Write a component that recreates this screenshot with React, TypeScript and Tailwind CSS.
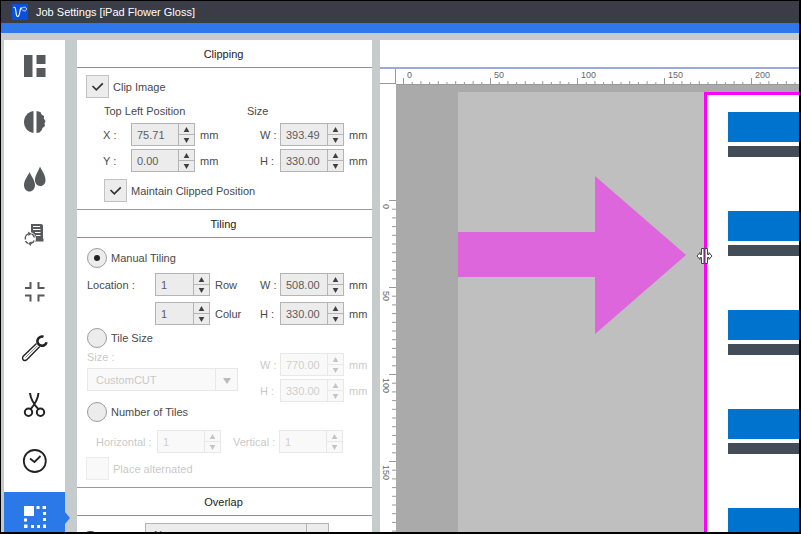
import React from 'react'
import clsx from 'clsx'

interface SpinBoxProps {
  label: string
  value: string
  unit?: string
  labelClass?: string
  boxClass?: string
  hideLabel?: boolean
}

const SpinBox: React.FC<SpinBoxProps> = ({
  label,
  value,
  unit,
  labelClass = 'w-5',
  boxClass = 'w-16',
  hideLabel = false,
}) => {
  return (
    <div className="flex items-center">
      <label className="flex items-center">
        {!hideLabel && (
          <span className={clsx('shrink-0 whitespace-pre', labelClass)}>
            {label}
          </span>
        )}
        <span
          className={clsx(
            'flex h-[23px] shrink-0 border border-[#b4b4b4] bg-[#ececec]',
            boxClass
          )}
        >
          <input
            type="text"
            defaultValue={value}
            aria-label={label}
            className="w-full min-w-0 flex-1 bg-transparent pl-[5px] text-[#5c5c5c] outline-none"
          />
          <span className="flex w-4 shrink-0 flex-col border-l border-[#b4b4b4]">
            <button
              type="button"
              aria-label={`Increase ${label}`}
              className="flex flex-1 items-center justify-center border-b border-[#b4b4b4]"
            >
              <svg width="7" height="5" viewBox="0 0 7 5" fill="#3f3f3f">
                <path d="M3.5 0 6.3 5H0.7Z" />
              </svg>
            </button>
            <button
              type="button"
              aria-label={`Decrease ${label}`}
              className="flex flex-1 items-center justify-center"
            >
              <svg width="7" height="5" viewBox="0 0 7 5" fill="#3f3f3f">
                <path d="M3.5 5 6.3 0H0.7Z" />
              </svg>
            </button>
          </span>
        </span>
      </label>
      {unit && <span className="ml-[5px]">{unit}</span>}
    </div>
  )
}

const CheckBox: React.FC<{ label: string; checked?: boolean }> = ({
  label,
  checked,
}) => (
  <label className="flex items-center gap-1">
    <span className="relative flex h-[23px] w-[23px]">
      <input
        type="checkbox"
        defaultChecked={checked}
        className="peer h-full w-full appearance-none border border-[#c2c2c2] bg-[#ececec]"
      />
      <svg
        className="pointer-events-none absolute inset-0 hidden peer-checked:block"
        viewBox="0 0 23 23"
        fill="none"
        stroke="#333"
        strokeWidth="1.7"
      >
        <path d="M6.5 11 10.3 14.8 16.8 8.3" />
      </svg>
    </span>
    {label}
  </label>
)

const Radio: React.FC<{ label: string; checked?: boolean }> = ({
  label,
  checked,
}) => (
  <label className="flex h-5 items-center gap-1">
    <span className="relative flex h-5 w-5">
      <input
        type="radio"
        name="tiling"
        defaultChecked={checked}
        className="peer h-full w-full appearance-none rounded-full border border-[#9c9c9c] bg-[#ececec]"
      />
      <span className="pointer-events-none absolute inset-[7px] hidden rounded-full bg-[#222] peer-checked:block" />
    </span>
    {label}
  </label>
)

const Select: React.FC<{ label: string; value: string; className: string }> = ({
  label,
  value,
  className,
}) => (
  <span
    className={clsx(
      'relative flex h-[23px] border border-[#b4b4b4] bg-[#ececec]',
      className
    )}
  >
    <select
      aria-label={label}
      className="w-full appearance-none bg-transparent pl-2 outline-none"
    >
      <option>{value}</option>
    </select>
    <span className="pointer-events-none absolute inset-y-0 right-0 flex w-[22px] items-center justify-center border-l border-[#b4b4b4] pt-0.5">
      <svg width="8" height="6" viewBox="0 0 8 6" fill="#222">
        <path d="M0 0H8L4 6Z" />
      </svg>
    </span>
  </span>
)

const SectionTitle: React.FC<{ children: React.ReactNode }> = ({
  children,
}) => (
  <h2 className="flex h-7 items-center justify-center border-b border-[#7d93bf] pr-0.5 text-[#222]">
    {children}
  </h2>
)

const navItems = [
  {
    name: 'Layout',
    icon: (
      <g fill="#58595b">
        <path d="M3 3h8.5v22H3zM15.500 3h9v9h-9zM15.500 16h9v9h-9z" />
      </g>
    ),
  },
  {
    name: 'Color',
    icon: (
      <g fill="#58595b">
        <path d="M12.5 3V25C7 24.500 3 19.500 3 14S7 3.500 12.500 3Z" />
        <path d="M15.500 3 19.500 4 20.500 6.500 23 8 22.800 10.500 24.500 13 23.500 15.500 24 18 21.500 20 20.500 22.500 18.500 24.500 15.500 25Z" />
      </g>
    ),
  },
  {
    name: 'Ink',
    icon: (
      <g fill="#58595b">
        <path d="M8.500 7C10 11 14 15 14 20 14 24 11.500 26.500 8.500 26.500S3 24 3 20C3 15 7 11 8.500 7Z" />
        <path d="M19 1.500C20.500 5.500 24.500 9.500 24.500 15 24.500 18.500 22.500 21 19.500 21S14.500 19 14 16C13.500 11 17.500 6 19 1.500Z" />
      </g>
    ),
  },
  {
    name: 'Job conversion',
    icon: (
      <g>
        <path
          fill="#58595b"
          d="M10 3H20Q22 3 22 5V17.500H22.500V20.500H13L10 17Z"
        />
        <path
          d="M12 5.500H19M12 8.500H19.500M14 11.500H19.500M15 14.500H19.500"
          stroke="#fff"
          strokeWidth="1"
        />
        <circle cx="8.500" cy="17.500" r="6.500" fill="#fff" />
        <path
          d="M4.500 18.500A4.600 4.600 0 0 1 7.500 12.900M10.500 12.900A4.600 4.600 0 0 1 13.400 16.500M13.200 19.500A4.600 4.600 0 0 1 10 22.300M7 22.300A4.600 4.600 0 0 1 4.500 20"
          fill="none"
          stroke="#58595b"
          strokeWidth="1.500"
        />
        <path
          fill="#58595b"
          d="M7 10.500 10.500 12.700 7.500 15ZM10.500 20.200 7 22.500 10 25Z"
        />
      </g>
    ),
  },
  {
    name: 'Marks',
    icon: (
      <path
        d="M4 10H9.500V4M17.500 4V10H23.500M4 17.500H9.500V23.500M17.500 23.500V17.500H23.500"
        fill="none"
        stroke="#58595b"
        strokeWidth="2"
      />
    ),
  },
  {
    name: 'Tools',
    icon: (
      <g fill="none" stroke="#222">
        <path d="M22.500 2.800A4.600 4.600 0 1 0 25.500 8.200" strokeWidth="2.600" />
        <path
          d="M15.500 9.500 2 22.500Q0.800 25 2.800 26.300 4.500 27 6 25.500L18.800 12.500"
          strokeWidth="1.400"
        />
        <path d="M4.500 23.500 16.500 11.800" strokeWidth="0.600" />
      </g>
    ),
  },
  {
    name: 'Cut',
    icon: (
      <g fill="none" stroke="#222" strokeWidth="2">
        <circle cx="7.500" cy="21.300" r="3.700" />
        <circle cx="19.500" cy="21.300" r="3.700" />
        <path d="M9 2C9.500 7 12.500 13 17.500 18.300M17.500 2C17 8 14 13 9.500 18.300" />
      </g>
    ),
  },
  {
    name: 'Schedule',
    icon: (
      <g fill="none" stroke="#222" strokeWidth="1.800">
        <circle cx="13.800" cy="14" r="11" />
        <path d="M9 11.500 13.500 15 19.500 9" />
      </g>
    ),
  },
]

const NavBar = () => (
  <nav className="flex w-[61px] shrink-0 flex-col bg-white">
    <div className="flex h-[447px] shrink-0 flex-col justify-between">
      {navItems.map((item) => (
        <button
          key={item.name}
          type="button"
          aria-label={item.name}
          className="flex h-[52px] items-center justify-center"
        >
          <svg width="28" height="28" viewBox="0 0 28 28">
            {item.icon}
          </svg>
        </button>
      ))}
    </div>
    <button
      type="button"
      aria-label="Clipping and tiling"
      className="relative mt-[5px] flex h-[52px] shrink-0 items-center justify-center bg-[#2b78e8]"
    >
      <svg width="28" height="28" viewBox="0 0 28 28" fill="#fff">
        <path d="M3 2h10v10H3zM15.500 2h3v3h-3zM21.500 2H25v3h-3.500zM22 8h3v3h-3zM22 14h3v3h-3zM22 20.500h3V24h-3zM16 21h3v3h-3zM10 21h3v3h-3zM3 20.500h3.500V24H3zM3 14.500h3v3H3z" />
      </svg>
      <svg
        className="absolute left-full top-[20px]"
        width="5"
        height="12"
        viewBox="0 0 5 12"
        fill="#2b78e8"
      >
        <path d="M0 0 5 6 0 12Z" />
      </svg>
    </button>
  </nav>
)

const SettingsPanel = () => (
  <main className="w-[295px] shrink-0 overflow-hidden bg-white">
    <section className="border-b border-[#9a9a9a]">
      <SectionTitle>Clipping</SectionTitle>
      <div className="py-[7px] pl-[9px]">
        <CheckBox label="Clip Image" checked />
        <div className="grid h-[25px] grid-cols-[143px_1fr] items-center pl-[18px]">
          <span>Top Left Position</span>
          <span>Size</span>
        </div>
        <div className="grid grid-cols-[157px_1fr] gap-y-[3px] pl-[17px]">
          <SpinBox label="X :" value="75.71" unit="mm" labelClass="w-7" />
          <SpinBox label="W :" value="393.49" unit="mm" />
          <SpinBox label="Y :" value="0.00" unit="mm" labelClass="w-7" />
          <SpinBox label="H :" value="330.00" unit="mm" />
        </div>
        <div className="mt-[7px] pl-[18px]">
          <CheckBox label="Maintain Clipped Position" checked />
        </div>
      </div>
    </section>

    <section className="border-b border-[#9a9a9a]">
      <SectionTitle>Tiling</SectionTitle>
      <div className="pb-[7px] pl-[10px] pt-[10px]">
        <Radio label="Manual Tiling" checked />
        <div className="mt-[5px] grid grid-cols-[173px_1fr] gap-y-[6px]">
          <SpinBox
            label="Location :"
            value="1"
            unit="Row"
            labelClass="w-[68px]"
            boxClass="w-[55px]"
          />
          <SpinBox label="W :" value="508.00" unit="mm" />
          <div className="pl-[68px]">
            <SpinBox
              label="Column"
              value="1"
              unit="Colur"
              boxClass="w-[55px]"
              hideLabel
            />
          </div>
          <SpinBox label="H :" value="330.00" unit="mm" />
        </div>
        <div className="mt-[3px]">
          <Radio label="Tile Size" />
        </div>
        <div className="grid grid-cols-[173px_1fr] pt-[1px] opacity-30">
          <div>
            <div className="mb-1 flex h-[15px] items-center">Size :</div>
            <Select label="Size" value="CustomCUT" className="w-[151px]" />
          </div>
          <div className="flex flex-col gap-[3px] pt-1">
            <SpinBox label="W :" value="770.00" unit="mm" />
            <SpinBox label="H :" value="330.00" unit="mm" />
          </div>
        </div>
        <Radio label="Number of Tiles" />
        <div className="mt-2 grid grid-cols-[137px_1fr] pl-[9px] opacity-30">
          <SpinBox label="Horizontal :" value="1" labelClass="w-[61px]" />
          <SpinBox label="Vertical :" value="1" labelClass="w-[46px]" />
        </div>
        <div className="-ml-px mt-1 opacity-30">
          <CheckBox label="Place alternated" />
        </div>
      </div>
    </section>

    <section>
      <SectionTitle>Overlap</SectionTitle>
      <div className="flex items-center pl-[10px] pt-[7px]">
        <span className="w-[58px]">Type :</span>
        <Select label="Type" value="None" className="w-[184px]" />
      </div>
    </section>
  </main>
)

const unitStep = 8.7
const topMarks = [0, 50, 100, 150, 200]
const sideMarks = [0, 50, 100, 150]

const TopRuler = () => (
  <svg className="h-4 flex-1" fill="#666" fontSize="9">
    {Array.from({ length: 60 }, (_, i) => (
      <rect
        key={i}
        x={7 + i * unitStep}
        y={i % 10 === 0 ? 9 : i % 2 === 0 ? 12 : 13}
        width="1"
        height="7"
        fill="#999"
      />
    ))}
    {topMarks.map((m, i) => (
      <text key={m} x={11 + i * unitStep * 10} y="9">
        {m}
      </text>
    ))}
  </svg>
)

const SideRuler = () => (
  <svg className="h-full w-4 shrink-0 bg-white" fill="#666" fontSize="9">
    {Array.from({ length: 50 }, (_, i) => (
      <rect
        key={i}
        x={i % 10 === 0 ? 9 : 12}
        y={116 + i * unitStep}
        width="7"
        height="1"
        fill="#999"
      />
    ))}
    {sideMarks.map((m, i) => (
      <text
        key={m}
        transform={`translate(3 ${120 + i * unitStep * 10}) rotate(90)`}
      >
        {m}
      </text>
    ))}
  </svg>
)

const Preview = () => (
  <section className="flex min-w-0 flex-1 flex-col bg-white">
    <div className="h-[29px] shrink-0 border-b-2 border-[#9aaad4]" />
    <div className="flex h-[15px] shrink-0">
      <div className="w-4 border-b border-r border-[#999]" />
      <TopRuler />
    </div>
    <div className="flex min-h-0 flex-1">
      <SideRuler />
      <div className="flex min-w-0 flex-1 overflow-hidden border-t border-[#999] bg-[#aaa] pl-[62px] pt-[7px]">
        <div className="flex min-w-0 flex-1 bg-[#bfbfbf]">
          <div className="w-[246px] shrink-0 pt-[84px]">
            <svg width="228" height="158" viewBox="0 0 228 158" fill="#de66dc">
              <path d="M0 56H137V0L228 79 137 158V101H0Z" />
            </svg>
          </div>
          <div className="relative min-w-0 flex-1 border-l-[3px] border-t-[3px] border-[#ff00ff] bg-white pl-[21px] pt-[17px]">
            <div className="flex flex-col gap-[54px]">
              {[0, 1, 2, 3, 4].map((row) => (
                <div key={row} className="flex flex-col gap-1">
                  <div className="h-[30px] bg-[#0073cf]" />
                  <div className="h-[11px] bg-[#434d57]" />
                </div>
              ))}
            </div>
            <svg
              className="absolute -left-[11px] top-[152px]"
              width="17"
              height="18"
              viewBox="0 0 17 18"
              fill="#fff"
              stroke="#444"
              strokeWidth="1"
            >
              <path d="M5.500 1.500H8V16.500H5.500V10.500H4V12.500L1 9 4 5.500V7.500H5.500Z" />
              <path d="M9 1.500H11.500V7.500H13V5.500L16 9 13 12.500V10.500H11.500V16.500H9Z" />
            </svg>
          </div>
        </div>
      </div>
    </div>
  </section>
)

export default function App() {
  return (
    <div className="flex h-screen flex-col overflow-hidden border-b-2 border-l border-r-2 border-t border-black bg-[#c6cccb] font-['Liberation_Sans',Arial,sans-serif] text-[11px] leading-[14px] text-[#4a4a4a]">
      <header className="flex h-8 shrink-0 items-center gap-2 border-b-[10px] border-[#2f78ec] bg-[#3a3c47] pl-[11px] text-white">
        <svg width="16" height="16" viewBox="0 0 16 16" className="shrink-0">
          <rect width="16" height="16" fill="#0a50d8" />
          <path
            d="M1.500 3.500C3 2.500 3.500 4 4 8 4.300 13.500 6.500 14 7.500 9.500 8.300 6.500 8 3.500 9.500 3.500"
            fill="none"
            stroke="#fff"
            strokeWidth="1.100"
          />
          <path
            d="M8.500 6C10 2.500 14.500 2.500 14.500 5 14.500 7.500 11 7.500 10 5.500"
            fill="none"
            stroke="#fff"
            strokeWidth="0.800"
          />
        </svg>
        <h1>Job Settings [iPad Flower Gloss]</h1>
      </header>
      <div className="flex min-h-0 flex-1 pl-[3px] pt-[7px]">
        <NavBar />
        <div className="w-3 shrink-0" />
        <SettingsPanel />
        <div className="w-2 shrink-0" />
        <Preview />
      </div>
    </div>
  )
}
